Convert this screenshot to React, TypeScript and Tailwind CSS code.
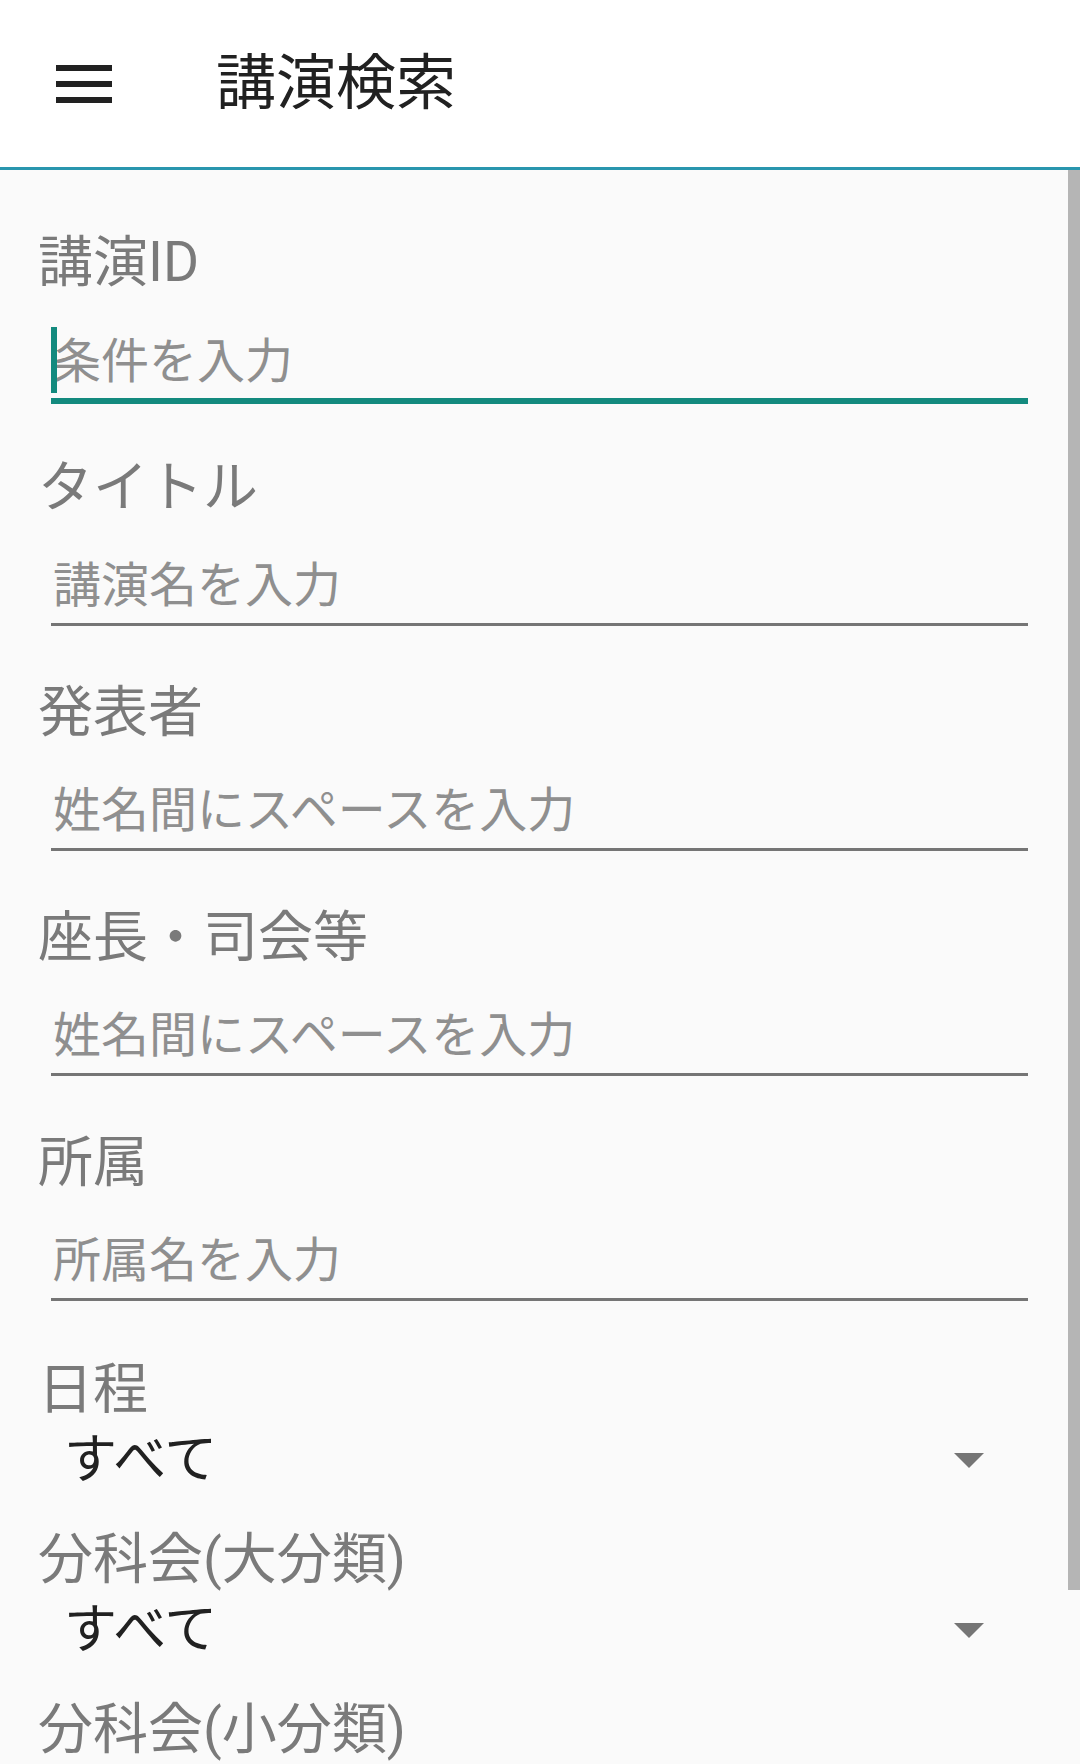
import React from "react";

const fields = [
	{ label: "講演ID", placeholder: "条件を入力", focused: true },
	{ label: "タイトル", placeholder: "講演名を入力" },
	{ label: "発表者", placeholder: "姓名間にスペースを入力" },
	{ label: "座長・司会等", placeholder: "姓名間にスペースを入力" },
	{ label: "所属", placeholder: "所属名を入力" },
];

const selects = [
	{ label: "日程", value: "すべて" },
	{ label: "分科会(大分類)", value: "すべて" },
	{ label: "分科会(小分類)", value: "すべて" },
];

function TextField({ label, placeholder, focused }: { label: string; placeholder: string; focused?: boolean }) {
	return (
		<div className="h-[225px] pt-[54px]">
			<div className="h-[64px] leading-[64px] text-[55px] pl-[38px] text-[#7a7a7a] whitespace-nowrap">{label}</div>
			<div className="relative mt-[35px] ml-[51px] mr-[40px]">
				<input
					type="text"
					placeholder={placeholder}
					className={
						focused
							? "block w-full h-[75px] pb-[5px] pl-[2px] bg-transparent outline-none text-[48px] text-[#212121] placeholder:text-[#8f8f8f] border-b-[6px] border-[#138a7e] caret-transparent"
							: "block w-full h-[72px] pb-[5px] pl-[2px] bg-transparent outline-none text-[48px] text-[#212121] placeholder:text-[#8f8f8f] border-b-[3px] border-[#757575]"
					}
				/>
				{focused && <div className="absolute left-0 top-[-2px] w-[6px] h-[66px] bg-[#138a7e]" />}
			</div>
		</div>
	);
}

function SelectField({ label, value }: { label: string; value: string }) {
	return (
		<div>
			<div className="h-[64px] leading-[64px] text-[55px] pl-[38px] text-[#7a7a7a] whitespace-nowrap">{label}</div>
			<div className="mt-[7px] h-[64px] ml-[51px] mr-[40px] pl-[13px] pr-[44px] flex items-center justify-between">
				<span className="text-[53px] leading-[64px] text-[#212121]">{value}</span>
				<svg width="30" height="15" viewBox="0 0 30 15">
					<polygon points="0,0 30,0 15,15" fill="#757575" />
				</svg>
			</div>
		</div>
	);
}

export default function App() {
	return (
		<div className="w-[1080px] h-[1764px] overflow-hidden bg-[#fafafa] font-['Roboto','Noto_Sans_CJK_JP',sans-serif]">
			<header className="h-[170px] bg-white border-b-[3px] border-[#2996ae] flex items-center">
				<div className="ml-[56px] flex flex-col gap-[10px]">
					<div className="w-[56px] h-[6px] bg-[#212121]" />
					<div className="w-[56px] h-[6px] bg-[#212121]" />
					<div className="w-[56px] h-[6px] bg-[#212121]" />
				</div>
				<h1 className="ml-[104px] text-[60px] leading-none text-[#212121]">講演検索</h1>
			</header>
			<div className="flex">
				<main className="flex-1 pt-[6px]">
					{fields.map((f) => (
						<TextField key={f.label} label={f.label} placeholder={f.placeholder} focused={f.focused} />
					))}
					<div className="pt-[56px] flex flex-col gap-[35px]">
						{selects.map((s) => (
							<SelectField key={s.label} label={s.label} value={s.value} />
						))}
					</div>
				</main>
				<div className="w-[12px]">
					<div className="h-[1420px] bg-[#b5b5b5]" />
				</div>
			</div>
		</div>
	);
}
